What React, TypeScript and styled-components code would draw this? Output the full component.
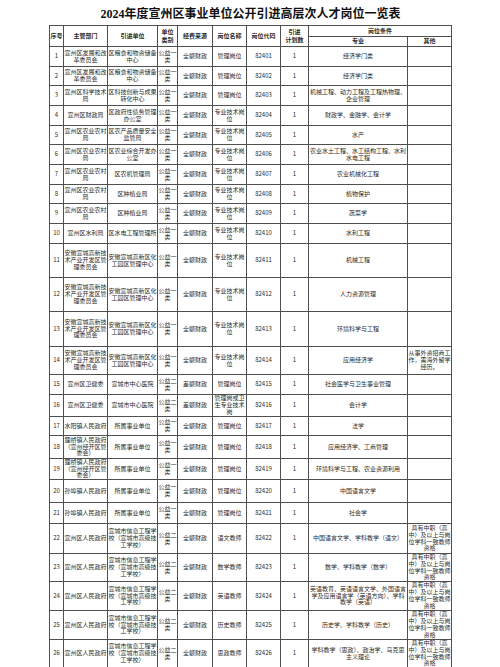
import styled, { createGlobalStyle } from "styled-components";

type Post = {
  dept: string;
  unit: string;
  kind: string;
  fund: string;
  post: string;
  code: string;
  major: string;
  other?: string;
  h: number;
};

const gaoxin = "安徽宣城高新技术产业开发区管理委员会";
const gaoxinUnit = "安徽宣城高新区化工园区管理中心";
const liqiao = "狸桥镇人民政府（宣州经开区管委会）";
const school = "宣城市信息工程学校（宣城市高级技工学校）";
const teacher = "具有中职（高中）及以上与岗位学科一致教师资格";

// h = row height in px, including its bottom rule
const posts: Post[] = [
  { dept: "宣州区发展和改革委员会", unit: "区粮食和物资储备中心", kind: "公益一类", fund: "全额财政", post: "管理岗位", code: "82401", major: "经济学门类", h: 20 },
  { dept: "宣州区发展和改革委员会", unit: "区粮食和物资储备中心", kind: "公益一类", fund: "全额财政", post: "管理岗位", code: "82402", major: "经济学门类", h: 19 },
  { dept: "宣州区科学技术局", unit: "区科技创新与成果转化中心", kind: "公益一类", fund: "全额财政", post: "管理岗位", code: "82403", major: "机械工程、动力工程及工程热物理、企业管理", h: 20 },
  { dept: "宣州区财政局", unit: "区政府性债务管理办公室", kind: "公益一类", fund: "全额财政", post: "专业技术岗位", code: "82404", major: "财政学、金融学、会计学", h: 20 },
  { dept: "宣州区农业农村局", unit: "区农产品质量安全监管局", kind: "公益一类", fund: "全额财政", post: "专业技术岗位", code: "82405", major: "水产", h: 19 },
  { dept: "宣州区农业农村局", unit: "区农业综合开发办公室", kind: "公益一类", fund: "全额财政", post: "专业技术岗位", code: "82406", major: "农业水土工程、水工结构工程、水利水电工程", h: 20 },
  { dept: "宣州区农业农村局", unit: "区农机管理局", kind: "公益一类", fund: "全额财政", post: "专业技术岗位", code: "82407", major: "农业机械化工程", h: 20 },
  { dept: "宣州区农业农村局", unit: "区种植业局", kind: "公益一类", fund: "全额财政", post: "专业技术岗位", code: "82408", major: "植物保护", h: 19 },
  { dept: "宣州区农业农村局", unit: "区种植业局", kind: "公益一类", fund: "全额财政", post: "专业技术岗位", code: "82409", major: "蔬菜学", h: 20 },
  { dept: "宣州区水利局", unit: "区水电工程管理所", kind: "公益一类", fund: "全额财政", post: "专业技术岗位", code: "82410", major: "水利工程", h: 20 },
  { dept: gaoxin, unit: gaoxinUnit, kind: "公益一类", fund: "全额财政", post: "专业技术岗位", code: "82411", major: "机械工程", h: 34 },
  { dept: gaoxin, unit: gaoxinUnit, kind: "公益一类", fund: "全额财政", post: "专业技术岗位", code: "82412", major: "人力资源管理", h: 34 },
  { dept: gaoxin, unit: gaoxinUnit, kind: "公益一类", fund: "全额财政", post: "专业技术岗位", code: "82413", major: "环境科学与工程", h: 35 },
  { dept: gaoxin, unit: gaoxinUnit, kind: "公益一类", fund: "全额财政", post: "专业技术岗位", code: "82414", major: "应用经济学", other: "从事外资招商工作，需海外留学经历。", h: 28 },
  { dept: "宣州区卫健委", unit: "宣城市中心医院", kind: "公益二类", fund: "差额财政", post: "管理岗位", code: "82415", major: "社会医学与卫生事业管理", h: 20 },
  { dept: "宣州区卫健委", unit: "宣城市中心医院", kind: "公益二类", fund: "差额财政", post: "管理岗或卫生专业技术岗", code: "82416", major: "会计学", h: 22 },
  { dept: "水阳镇人民政府", unit: "所属事业单位", kind: "公益一类", fund: "全额财政", post: "管理岗位", code: "82417", major: "法学", h: 19 },
  { dept: liqiao, unit: "所属事业单位", kind: "公益一类", fund: "全额财政", post: "管理岗位", code: "82418", major: "应用经济学、工商管理", h: 23 },
  { dept: liqiao, unit: "所属事业单位", kind: "公益一类", fund: "全额财政", post: "管理岗位", code: "82419", major: "环境科学与工程、农业资源利用", h: 21 },
  { dept: "孙埠镇人民政府", unit: "所属事业单位", kind: "公益一类", fund: "全额财政", post: "管理岗位", code: "82420", major: "中国语言文学", h: 23 },
  { dept: "孙埠镇人民政府", unit: "所属事业单位", kind: "公益一类", fund: "全额财政", post: "管理岗位", code: "82421", major: "社会学", h: 21 },
  { dept: "宣州区人民政府", unit: school, kind: "公益二类", fund: "全额财政", post: "语文教师", code: "82422", major: "中国语言文学、学科教学（语文）", other: teacher, h: 30 },
  { dept: "宣州区人民政府", unit: school, kind: "公益二类", fund: "全额财政", post: "数学教师", code: "82423", major: "数学、学科教学（数学）", other: teacher, h: 28 },
  { dept: "宣州区人民政府", unit: school, kind: "公益二类", fund: "全额财政", post: "英语教师", code: "82424", major: "英语教育、英语语言文学、外国语言学及应用语言学（英语方向）、学科教学（英语）", other: teacher, h: 29 },
  { dept: "宣州区人民政府", unit: school, kind: "公益二类", fund: "全额财政", post: "历史教师", code: "82425", major: "历史学、学科教学（历史）", other: teacher, h: 29 },
  { dept: "宣州区人民政府", unit: school, kind: "公益二类", fund: "全额财政", post: "思政教师", code: "82426", major: "学科教学（思政）、政治学、马克思主义理论", other: teacher, h: 28 },
];

const cols = [13, 43, 49, 19, 34, 33, 33, 27, 98, 43];
const rowTracks = [10, 9, ...posts.map((p) => p.h - 1)];

const PostRow = ({ p, n }: { p: Post; n: number }) => (
  <>
    <Cell>{n}</Cell>
    <Cell>{p.dept}</Cell>
    <Cell>{p.unit}</Cell>
    <Cell>{p.kind}</Cell>
    <Cell>{p.fund}</Cell>
    <Cell>{p.post}</Cell>
    <Cell>{p.code}</Cell>
    <Cell>1</Cell>
    <Cell>{p.major}</Cell>
    <Cell>{p.other ?? ""}</Cell>
  </>
);

const App = () => {
  return (
    <Page>
      <GlobalStyle />
      <Title>2024年度宣州区事业单位公开引进高层次人才岗位一览表</Title>
      <Sheet $cols={cols} $rows={rowTracks}>
        <Head $tall>序号</Head>
        <Head $tall>主管部门</Head>
        <Head $tall>引进单位</Head>
        <Head $tall>
          单位
          <br />
          类别
        </Head>
        <Head $tall>经费来源</Head>
        <Head $tall>岗位名称</Head>
        <Head $tall>岗位代码</Head>
        <Head $tall>
          引进
          <br />
          计划数
        </Head>
        <Head $wide>岗位条件</Head>
        <Head>专业</Head>
        <Head>其他</Head>

        {posts.map((p, i) => (
          <PostRow key={p.code} p={p} n={i + 1} />
        ))}
      </Sheet>
    </Page>
  );
};

const GlobalStyle = createGlobalStyle`
  body {
    margin: 0;
    background: #ffffff;
  }
`;

const Page = styled.div`
  width: 403px;
  margin: 0 0 0 49px;
  display: flex;
  flex-direction: column;
  color: #2a2a2a;
  font-family: "Noto Sans CJK SC", sans-serif;
`;

const Title = styled.h1`
  margin: 0;
  height: 25px;
  display: flex;
  align-items: center;
  justify-content: center;
  font-family: "Liberation Serif", "Noto Sans CJK SC", serif;
  font-size: 12px;
  font-weight: bold;
  color: #111;
  white-space: nowrap;
`;

const Sheet = styled.div<{ $cols: number[]; $rows: number[] }>`
  display: grid;
  grid-template-columns: ${(p) => p.$cols.map((c) => `${c}px`).join(" ")};
  grid-template-rows: ${(p) => p.$rows.map((r) => `${r}px`).join(" ")};
  gap: 1px;
  padding: 1px;
  background: #505050;
`;

const Cell = styled.div`
  background: #fff;
  display: flex;
  align-items: center;
  justify-content: center;
  text-align: center;
  font-size: 6px;
  line-height: 6.8px;
  word-break: break-all;
`;

const Head = styled(Cell)<{ $tall?: boolean; $wide?: boolean }>`
  grid-row: ${(p) => (p.$tall ? "span 2" : "auto")};
  grid-column: ${(p) => (p.$wide ? "span 2" : "auto")};
  font-weight: bold;
  line-height: 8.5px;
`;

export default App;
